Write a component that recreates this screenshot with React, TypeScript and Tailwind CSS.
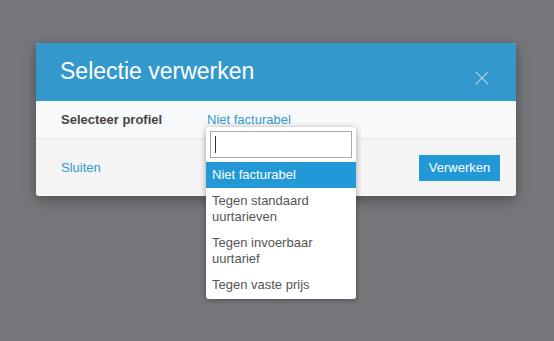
import { X } from 'lucide-react';

const options = ['Niet facturabel', 'Tegen standaard uurtarieven', 'Tegen invoerbaar uurtarief', 'Tegen vaste prijs'];

export default function App() {
  return (
    <div
      className="h-[341px] w-[554px] overflow-hidden bg-[#75777a] pl-[36px] pt-[43px]"
      style={{ fontFamily: '"Liberation Sans", Arial, sans-serif' }}
    >
      <div className="relative w-[480px] rounded-[3px] bg-[#f4f4f4] shadow-[0_4px_14px_rgba(0,0,0,0.35)]">
        <div className="flex h-[58px] items-center justify-between rounded-t-[3px] bg-[#3399cc] pl-[24px] pr-[22px]">
          <h3 className="pb-[2px] text-[23px] text-white">Selectie verwerken</h3>
          <X className="mt-[12px] h-[24px] w-[24px] text-white/50" strokeWidth={1.2} />
        </div>

        <div className="flex h-[38px] items-center border-b border-[#e6e8ea] bg-[#f8f9fa] pl-[25px] text-[13px]">
          <span className="w-[146px] font-bold text-[#444]">Selecteer profiel</span>
          <span className="text-[#3399cc]">Niet facturabel</span>
        </div>

        <div className="flex h-[57px] items-center justify-between pl-[25px] pr-[16px] text-[13px]">
          <span className="text-[#3399cc]">Sluiten</span>
          <button type="button" className="h-[26px] w-[81px] bg-[#2299d6] text-[13px] text-white">
            Verwerken
          </button>
        </div>

        <div className="absolute left-[170px] top-[84px] w-[150px] rounded-[3px] bg-white pb-[1px] shadow-[0_1px_6px_rgba(0,0,0,0.35)]">
          <div className="p-[4px]">
            <div className="flex h-[27px] items-center border border-[#aaa] px-[4px]">
              <div className="h-[17px] w-px bg-[#333]" />
            </div>
          </div>
          <ul className="text-[13px] leading-[16px]">
            {options.map((o, i) => (
              <li
                key={o}
                className={
                  i === 0
                    ? 'bg-[#2299d6] px-[6px] py-[5px] text-white'
                    : 'px-[6px] py-[5px] text-[#555]'
                }
              >
                {o}
              </li>
            ))}
          </ul>
        </div>
      </div>
    </div>
  );
}
